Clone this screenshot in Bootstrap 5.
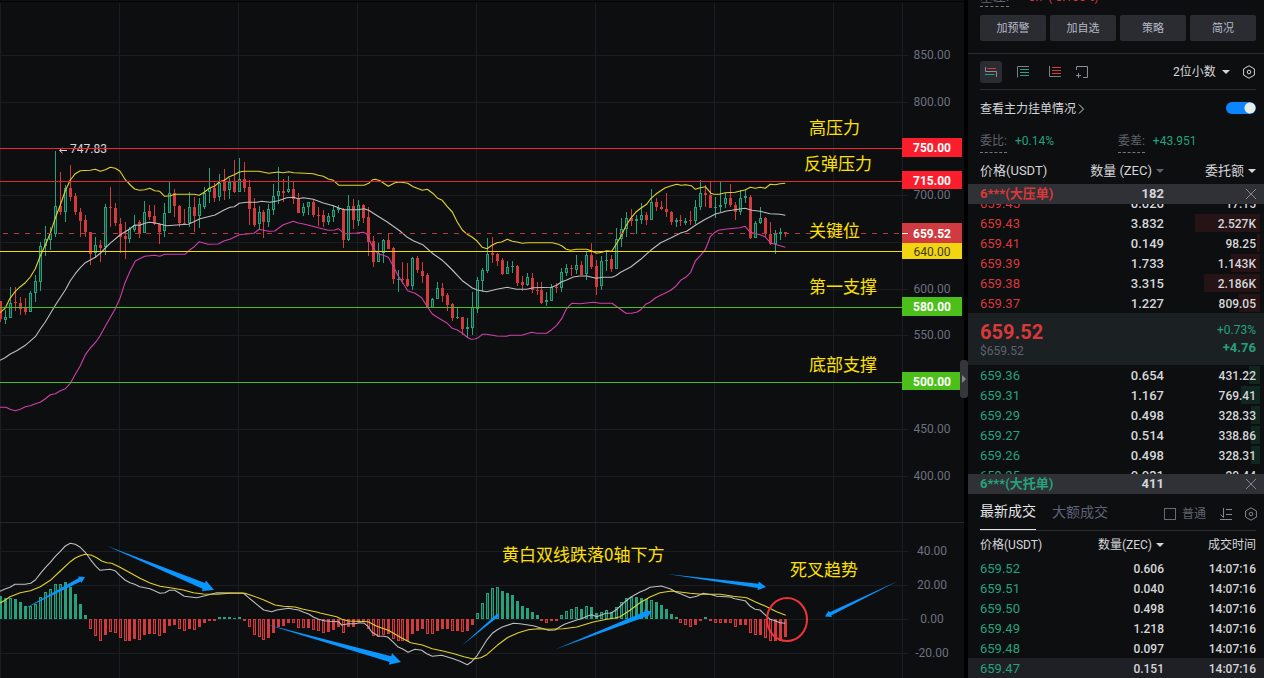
<!DOCTYPE html>
<html lang="zh-CN">
<head>
<meta charset="utf-8">
<meta name="viewport" content="width=device-width, initial-scale=1">
<title>ZEC/USDT</title>
<link href="https://cdn.jsdelivr.net/npm/bootstrap@5.3.0/dist/css/bootstrap.min.css" rel="stylesheet">
<style>
:root{--up:#25a17b;--down:#d9393a;--ink:#d5d6d9;--dim:#5f636e}
body{background:#0d0e10;color:var(--ink);font:13px/20px Roboto,"Noto Sans CJK SC",sans-serif;overflow:hidden}
.chart{background:#0d0e10;min-width:0;border-right:4px solid #000}
.chart svg{width:100%;height:auto}
.axis{font-size:12px;fill:#6c7080}
.tag{font-size:12px;font-weight:700;fill:#fff}
.note{font-size:17px;fill:#ffe100;font-family:"Noto Sans CJK SC",sans-serif}
.handle{position:absolute;right:-4px;top:360px;width:8px;height:38px;background:#35363c;border:0;border-radius:3px;padding:0;color:#85868c}
.handle svg{width:8px;height:38px}
.side{width:296px;background:#0d0e10}
.up{color:var(--up)}
.down{color:var(--down)}
.dim{color:var(--dim)}
.px-side{padding-left:12px;padding-right:8px}
.basis{height:7px;line-height:22px}
.basis span{margin-top:-14px;height:21px}
.hint{border-bottom:1px dashed #777}
.tool{flex:1 1 0;background:#2b2c32;color:#b3b9c6;border:0;border-radius:2px;font-size:11px;line-height:28px;height:26px;padding:0}
.tool:hover{background:#383940;color:#fff}
.rule{height:1px;background:#2b2c30}
.split{margin-top:12px}
.views{height:35px}
.views .ico+.ico{margin-left:10px}
.views .ico:nth-child(4){margin-left:5px}
.ico{width:22px;height:22px;padding:0;border:0;border-radius:3px;background:none;line-height:0}
.ico.on{background:#2b2c32}
.ico svg,.plain svg{display:block}
.plain{border:0;background:none;padding:0;color:inherit}
.gear{margin-left:12px}
.digits{appearance:none;background:none;border:0;color:var(--ink);font-size:12px;padding:0;width:49px}
.caret{width:0;height:0;border:4px solid transparent;border-top-color:currentColor;border-bottom:0;display:inline-block;vertical-align:2px;margin-left:4px}
.main-row{height:37px}
.side .switch{width:30px;height:12px;margin:0 0 1px;border:0;background-color:#0a84ff;border-radius:6px;appearance:none;background-image:radial-gradient(circle at 24px 6px,#e8eee6 5px,transparent 6px);display:block}
.stat{height:24px;padding-top:5px;line-height:18px}
.stat .hint{height:21px}
.diff{margin-left:64px}
.cols{display:grid;grid-template-columns:96px 88px 1fr}
.cols>:nth-child(2),.cols>:nth-child(3){text-align:right}
.head{height:33px;padding-top:10px}
.band{height:20px;background:#303136;font-weight:700}
.ladder{height:109px;overflow:hidden}
.tick{width:100%;table-layout:fixed;flex-shrink:0}
.tick td,.tick th{height:20px;padding:0;text-align:right;font-weight:400}
.tick td{padding-top:2px;line-height:18px}
.tick td+td{font-weight:500}
.tick td:first-child,.tick th:first-child{text-align:left;padding-left:12px;width:108px}
.tick td:nth-child(2),.tick th:nth-child(2){width:88px}
.tick td:last-child,.tick th:last-child{font-size:12px;padding-right:8px;background-repeat:no-repeat;background-position:right 4px center}
.trades td:nth-child(2){font-size:12px}
.asks td:last-child{background-image:linear-gradient(#261315,#261315)}
.bids td:last-child{background-image:linear-gradient(#0f2720,#0f2720)}
.tick th{font-size:12px;height:27px}
.tick .now{background:#1f2025}
.last{height:52px;background:#1b2023}
.big{font-size:20px;font-weight:700;line-height:20px;padding-top:4px}
.usd{line-height:18px}
.move{line-height:17px}
.tab{font-size:14px;line-height:35px;height:36px;padding:0;border:0;background:none;color:#5e6378}
.tab.on{color:#e4e5e8;border-bottom:1px solid #e4e5e8}
.tabs .plain,.tabs label{margin-top:4px}
.tabs .sort{margin-left:14px}
.tabs .last-tool{margin-left:12px;margin-right:-2px}
.tick-box{appearance:none;width:12px;height:12px;border:1px solid #666a72;margin:0 6px 0 0}
.small-t{font-size:12px}
</style>
<script src="https://cdn.jsdelivr.net/npm/bootstrap@5.3.0/dist/js/bootstrap.bundle.min.js"></script>
</head>
<body>
<div class="d-flex vh-100">
<main class="chart flex-grow-1 position-relative">
<svg id="plot" viewBox="0 0 964 678" class="d-block" role="img" aria-label="K线图与MACD"></svg>
<button class="handle" type="button" aria-label="展开"><svg class="d-block" viewBox="0 0 8 38"><path d="M2 15l4 4-4 4z" fill="currentColor"/></svg></button>
</main>

<aside class="side flex-shrink-0 overflow-hidden">
  <div class="px-side d-flex basis overflow-hidden"><span class="hint dim">基差:</span><span class="down ms-3 small-t">-0.7 (-0.106%)</span></div>
  <div class="px-side d-flex gap-1 pt-2">
    <button class="btn tool" type="button">加预警</button>
    <button class="btn tool" type="button">加自选</button>
    <button class="btn tool" type="button">策略</button>
    <button class="btn tool" type="button">简况</button>
  </div>
  <div class="rule split"></div>
  <div class="px-side">
    <div class="d-flex align-items-center views">
      <button class="ico on" type="button" aria-label="买卖盘"><svg width="22" height="22" fill="none"><path d="M5.500 6v4.500h11V16" stroke="#8b8e96"/><path d="M7.500 7.500H16" stroke="#e0393b"/><path d="M5 13.500h9.500" stroke="#25a17b"/></svg></button>
      <button class="ico" type="button" aria-label="买盘"><svg width="22" height="22" fill="none"><path d="M17 5.500H5.500V16.500" stroke="#7d8088"/><path d="M8 8.500h9M8 11.500h9M8 14.500h9" stroke="#25a17b"/></svg></button>
      <button class="ico" type="button" aria-label="卖盘"><svg width="22" height="22" fill="none"><path d="M5.500 5v10.500H17" stroke="#7d8088"/><path d="M8 6.500h9M8 9.500h9M8 12.500h9" stroke="#d9393a"/></svg></button>
      <button class="ico" type="button" aria-label="新建"><svg width="22" height="22" fill="none" stroke="#8b8e96"><path d="M5.500 9V5.500h11v11H12M5 14.500h5M7.500 12v5"/></svg></button>
      <select class="digits ms-auto" aria-label="小数位数"><option>2位小数</option></select><span class="caret m-0"></span>
      <button class="plain gear" type="button" aria-label="设置"><svg width="14" height="14" viewBox="0 0 14 14" fill="none" stroke="currentColor"><path d="M7 .8l5.400 3.100v6.200L7 13.200l-5.400-3.100V3.900z"/><circle cx="7" cy="7" r="1.800"/></svg></button>
    </div>
    <div class="rule"></div>
    <div class="d-flex align-items-center justify-content-between main-row">
      <a href="#" class="text-reset text-decoration-none small-t">查看主力挂单情况<svg width="9" height="10" viewBox="0 0 9 10" fill="none" stroke="currentColor"><path d="M3 .5l4.500 4.500L3 9.500"/></svg></a>
      <input class="switch" type="checkbox" role="switch" aria-label="查看主力挂单情况" checked>
    </div>
    <div class="d-flex stat small-t">
      <span><span class="hint dim d-inline-block">委比:</span><span class="up ms-2">+0.14%</span></span>
      <span class="diff"><span class="hint dim d-inline-block">委差:</span><span class="up ms-2">+43.951</span></span>
    </div>
    <div class="cols head">
      <div>价格(USDT)</div><div class="text-nowrap">数量 (ZEC)<span class="caret dim"></span></div><div>委托额<span class="caret"></span></div>
    </div>
  </div>
  <div class="band px-side cols align-items-center"><span class="down">6***(大压单)</span><span>182</span><button class="plain dim ms-auto" type="button" aria-label="关闭"><svg width="10" height="10" viewBox="0 0 10 10" stroke="#85878e"><path d="M0 0l10 10M10 0L0 10"/></svg></button></div>
  <div class="ladder d-flex flex-column justify-content-end"><table class="tick asks" id="asks"></table></div>
  <div class="last px-side d-flex justify-content-between align-items-center">
    <div><div class="big down">659.52</div><div class="dim small-t usd">$659.52</div></div>
    <div class="text-end up move"><div class="small-t">+0.73%</div><div class="fw-bold">+4.76</div></div>
  </div>
  <div class="ladder"><table class="tick bids" id="bids"></table></div>
  <div class="band px-side cols align-items-center"><span class="up">6***(大托单)</span><span>411</span><button class="plain dim ms-auto" type="button" aria-label="关闭"><svg width="10" height="10" viewBox="0 0 10 10" stroke="#85878e"><path d="M0 0l10 10M10 0L0 10"/></svg></button></div>
  <div class="px-side">
    <div class="d-flex align-items-center tabs">
      <button class="tab on" type="button">最新成交</button><button class="tab ms-3" type="button">大额成交</button>
      <label class="ms-auto d-flex align-items-center small-t dim"><input class="tick-box" type="checkbox">普通</label>
      <button class="plain sort" type="button" aria-label="排序"><svg width="12" height="12" fill="none" stroke="#85878e"><path d="M3.500 0v9.500L.5 6.500M6 1.500h6M6 6.500h6M0 11.500h12"/></svg></button>
      <button class="plain last-tool" type="button" aria-label="设置"><svg width="14" height="14" viewBox="0 0 14 14" fill="none" stroke="#85878e"><path d="M7 .8l5.400 3.100v6.200L7 13.200l-5.400-3.100V3.900z"/><circle cx="7" cy="7" r="1.800"/></svg></button>
    </div>
    <div class="rule"></div>
  </div>
  <table class="tick trades"><thead><tr><th>价格(USDT)</th><th>数量(ZEC)<span class="caret"></span></th><th>成交时间</th></tr></thead><tbody id="trades"></tbody></table>
</aside>
</div>
<script>
const W='#bdbec1',Y='#e3d229',M='#cf3fa8',UP='#25a17b',DN='#d23b3c',BLUE='#0a96ff';
let out='';
const line=(x1,y1,x2,y2,c,extra='')=>out+=`<path d="M${x1} ${y1}L${x2} ${y2}" stroke="${c}" ${extra}/>`;
const rect=(x,y,w,h,c,extra='')=>out+=`<rect x="${x}" y="${y}" width="${w}" height="${h}" fill="${c}" ${extra}/>`;
const text=(x,y,s,cls,extra='')=>out+=`<text x="${x}" y="${y}" class="${cls}" ${extra}>${s}</text>`;

// grid
for(const x of [0,119,238,357,476,595,714,833,902]) line(x+.5,3,x+.5,678,'#1b1d20');
for(const y of [55,102,195,242,289,335,429,476,551,585,619,653]) line(0,y+.5,908,y+.5,'#1b1d20');
line(0,522.5,964,522.5,'#25272b');
line(0,1.5,964,1.5,'#050506');

// candles: high, open/close top, bottom, low in thirds of a unit below y=130; letter marks direction
const candles=`r513,513,568,575 g540,561,569,583 g470,520,563,563 r470,517,520,542 r502,519,536,555 r505,535,545,556 g483,489,545,545 g435,454,490,517 g337,349,455,482 g289,327,348,377 g290,310,330,360 g62,229,311,320 r125,228,245,255 g165,174,245,277 r106,175,200,212 r190,197,245,255 r233,246,272,320 r256,270,306,320 r305,306,372,405 g321,345,370,383 r330,345,353,395 g222,231,350,374 r172,231,235,290 r220,233,280,288 r265,281,320,368 r277,318,326,388 g290,298,326,338 g255,284,300,305 r270,275,312,325 g213,245,309,309 r225,244,262,270 r225,258,283,285 r278,282,305,343 g220,248,304,322 g157,190,250,250 r176,190,228,260 r225,227,278,290 r238,279,282,285 g185,232,280,290 r200,232,257,307 g205,222,257,294 g170,188,230,236 g115,174,187,220 r160,175,203,217 g133,160,201,212 r117,156,182,210 g143,157,180,206 r91,155,187,188 g84,148,187,187 r97,148,173,186 r150,172,236,286 r203,235,285,290 g227,247,283,300 r240,247,275,325 g222,238,275,290 g162,199,239,256 g112,184,199,222 r148,184,188,217 g138,178,187,189 r152,178,208,222 r190,207,248,250 g218,230,248,258 g215,217,231,255 r207,217,255,260 r230,254,258,288 r240,256,276,292 g248,259,276,284 g224,240,260,275 g226,234,239,248 r233,237,330,353 g195,229,329,334 r206,229,271,298 g210,226,272,288 r223,225,264,280 r232,262,335,378 r318,334,395,410 g340,368,395,395 g327,331,368,400 r312,330,356,358 r352,354,448,462 g420,447,450,487 r395,446,450,462 r398,448,467,470 g382,385,467,480 r378,385,420,430 r395,422,437,460 r430,435,532,535 g503,508,533,533 g455,475,508,508 r458,475,498,517 r488,495,524,543 r520,523,563,573 g532,560,564,568 r560,562,597,615 g565,592,596,625 g485,532,593,616 g442,451,536,548 g415,420,452,485 g325,373,422,430 r320,370,374,400 r370,372,392,408 r385,390,432,434 g394,412,431,432 g393,407,411,428 r406,408,458,468 r437,456,464,483 g430,442,465,467 r428,443,480,488 r455,480,484,495 r455,480,518,522 g486,510,517,529 g462,472,513,513 r460,470,475,488 g415,426,475,485 g402,415,428,438 r404,413,417,438 g375,404,420,431 r393,405,435,435 g363,376,433,450 r338,375,410,418 r390,407,470,495 g378,394,469,480 g362,389,394,423 r376,387,416,425 g294,328,416,418 g265,298,328,350 g245,265,297,322 r237,265,272,288 g255,266,272,312 g220,255,270,282 r245,255,270,285 g177,217,269,270 r205,217,232,242 r212,231,238,240 r188,237,247,262 r243,247,275,285 g265,271,276,292 r255,270,274,288 g265,274,278,285 r243,270,274,285 g210,232,274,282 g150,189,232,240 r165,190,196,230 r157,196,233,235 g202,230,234,263 g155,224,230,245 g190,204,223,235 r162,205,225,232 r215,225,247,270 g180,203,247,255 g178,198,203,218 r195,202,325,328 g273,279,323,325 g232,265,280,282 r262,265,310,320 r275,311,342,345 g300,312,343,372 g293,307,313,330 r305,307,313,322`.split(' ');
const slot=i=>Math.floor(.9+4.964*i);
candles.forEach((s,i)=>{
  const up=s[0]=='g',c=up?UP:DN,[h,t,b,l]=s.slice(1).split(',').map(v=>Math.round(130+v/3)),x=slot(i),bh=Math.max(1,b-t);
  rect(x,h,1,l-h,c); rect(x-1,t,3,bh,c);
  if(up&&bh>2) rect(x,t+1,1,bh-2,'#123d32');
});

// curves given as panel segments with their own horizontal origin
const curve=(base,c,...seg)=>{
  const p=[];
  for(const [ox,oy,d] of seg) for(const q of d.split(' ')){const [x,y]=q.split(',');p.push(((+x+ox)/3).toFixed(1)+' '+(base+(+y+oy)/3).toFixed(1))}
  out+=`<path d="M${p.join('L')}" fill="none" stroke="${c}" stroke-width="1.1" stroke-linejoin="round"/>`;
};
curve(130,Y,[0,0,'0,548 16,534 30,505 46,484 61,470 76,458 91,441 106,416 121,377 136,345 151,310 166,264 181,225 196,182 211,150 226,131 241,122 271,121 286,118 301,124 316,119 331,112 346,115 360,124 376,149 391,165 404,177 419,181 434,179 449,175 464,182 479,184 494,199 511,197 526,193 583,193 598,196 613,187 628,175 643,169 658,156 673,151 688,140 703,134 718,126 733,124 776,124 806,130 835,126 850,128 866,125 881,128 915,130'],
 [900,0,'40,131 55,136 70,139 85,147 100,151 117,166 192,166 206,160 218,149 226,148 240,152 265,169 285,158 300,156 323,160 340,170 367,181 382,178 400,191 412,204 427,211 442,230 457,246 472,276 487,300 502,313 517,322 532,334 547,352 561,356 576,346 591,338 605,336 622,328 637,334 650,336 667,340 685,338 757,338 775,343 785,347 799,358 812,361 829,358 860,358 875,363 890,370 905,367 920,362'],
 [1740,-60,'95,424 107,405 122,380 138,347 152,325 167,307 182,295 200,283 212,266 227,253 242,242 256,233 272,228 290,223 303,226 317,224 334,227 346,238 361,233 376,230 393,250 401,253 418,253 436,248 466,247 481,243 495,240 511,232 526,235 541,232 556,235 571,223 586,224 600,221 616,220']);
curve(130,W,[0,0,'0,691 15,683 31,672 50,662 76,646 106,620 121,597 136,576 166,526 196,480 211,452 226,431 241,413 256,398 271,390 286,382 301,370 316,354 330,340 360,315 390,296 404,285 419,286 434,280 449,277 466,279 479,282 500,287 540,284 565,283 580,276 600,266 645,255 672,240 690,232 703,230 718,220 740,217 770,217 785,214 810,217 835,212 860,203 880,202 895,206 910,203'],
 [900,0,'40,208 70,219 100,227 117,234 132,239 175,239 192,236 206,241 220,250 262,276 300,303 322,322 340,332 368,344 400,372 427,391 442,405 457,420 487,452 502,463 517,474 532,480 560,485 590,478 622,472 650,478 680,478 700,473 755,472 770,466 785,455 800,450 820,441'],
 [1740,-60,'0,498 20,498 48,505 68,502 96,502 107,497 122,487 152,471 182,448 212,421 242,398 272,384 302,369 320,364 346,346 376,328 391,320 406,312 421,308 440,303 495,295 515,301 540,304 570,311 600,313 616,316']);
curve(130,M,[0,0,'0,832 18,832 30,838 46,842 61,838 76,830 91,827 106,821 121,817 136,806 151,794 166,791 181,782 196,776 211,760 226,733 241,707 256,674 271,654 286,638 300,618 315,590 345,538 360,505 375,458 390,424 406,393 419,386 434,379 464,376 479,379 494,373 555,373 568,361 583,350 598,335 624,343 655,342 673,332 690,328 718,314 740,312 762,310 777,298 806,304 824,303 850,284 880,274 895,279'],
 [900,0,'0,280 20,284 85,301 104,300 115,296 133,311 170,309 190,307 200,312 215,345 225,362 235,372 250,376 265,382 278,405 293,435 308,458 323,482 345,490 365,503 382,530 397,552 412,562 442,580 457,595 472,600 487,610 502,622 512,628 524,627 535,623 547,613 560,613 590,618 620,619 630,616 665,616 695,607 710,610 740,610 755,599 770,586 785,566 800,535 815,520'],
 [1740,-60,'0,581 40,577 60,580 96,580 115,593 138,610 155,610 172,606 182,599 197,583 210,577 227,563 256,549 272,541 287,529 302,511 317,502 332,487 346,453 361,437 376,419 391,380 401,370 415,361 440,357 480,353 495,349 511,367 540,374 556,381 571,398 590,404 616,412']);

// MACD histogram, h = hollow bar
const hist='198 204 205h 207 216 228 228h 222h 201h 186h 178h 163h 162h 156 170 192 222 255 297h 318h 333h 315 306h 308h 323h 332h 333 327 329h 315 312 312h 317h 308 288 285 297h 302h 297 299h 290 279 272 272 262 262 262 264 262 272 290h 314h 320h 329h 324 308 290 288 278 280h 293h 293h 293 299h 302h 308h 305 299 290 308h 290 290 275 275 298h 317h 322h 314h 311 328h 334h 334h 332 311 302 297 311h 311h 302 296 296 302h 302 305h 302 285 250h 219h 190h 174h 172h 183 189 196 213 228 234 246 255 272 280h 272 272 256h 244h 238h 231h 238 228h 232 250 246h 240h 247 232h 217h 204h 200h 202 204 207 210h 216 225 237 252 261 279h 284h 290h 284 272 262 272 278h 278h 278 280h 290h 284 284 308h 314h 314 323h 332h 332 332 320'.split(' ');
hist.forEach((s,i)=>{
  const v=parseInt(s),up=v<267,c=up?UP:DN,x=slot(i)-1,y=Math.round(530+v/3),h=up?619-y:y-619;
  const t=up?y:619;
  rect(x,t,3,Math.max(1,h),c);
  if(s.endsWith('h')&&h>2) rect(x+1,t+1,1,h-2,up?'#14493b':'#4b191b');
});
curve(530,W,[0,0,'0,184 15,177 30,172 45,163 75,163 92,160 106,150 121,131 136,113 151,97 166,79 181,64 196,48 211,40 226,43 241,52 256,67 271,88 286,107 300,121 330,118 345,122 360,137 375,150 390,158 404,163 419,170 450,176 480,190 495,188 508,181 524,181 538,189 553,199 590,203 615,197 650,188 730,189 745,202 770,223 791,240 815,245 830,240 866,235 881,238 896,240 911,247 926,252 941,262 956,268 972,272'],
 [960,0,'30,274 55,275 65,285 85,281 105,281 118,278 133,280 145,290 155,306 175,318 190,319 203,321 218,335 233,350 248,357 264,367 285,358 305,361 320,371 337,379 365,376 400,386 420,394 442,404 455,395 472,376 487,352 502,328 517,310 532,299 547,291 580,280 600,281 640,287 665,295 685,301 705,300 720,290 735,282 770,270 785,266 800,259 815,254 830,260 858,250 873,249 888,240 903,226 918,213 933,201'],
 [1920,0,'0,186 15,180 30,172 64,168 92,177 107,186 125,193 150,203 170,199 190,190 215,194 230,199 270,201 285,206 315,212 330,228 345,238 360,240 375,254 390,268 405,272 420,278 435,280']);
curve(530,Y,[0,0,'0,219 15,211 30,200 61,188 91,182 121,170 151,151 181,123 211,95 226,84 241,77 256,73 275,76 290,83 305,93 320,98 335,100 360,112 390,128 420,145 450,159 480,169 510,173 550,180 580,188 610,192 650,193 690,190 735,190 760,198 790,209 825,225 850,229 885,231 910,238 950,246'],
 [960,0,'0,249 50,260 65,268 85,273 145,275 170,289 205,301 245,324 272,338 307,345 337,356 372,364 402,371 432,380 460,387 482,383 500,374 532,346 562,323 595,308 625,299 655,296 685,298 730,296 770,291 820,276 860,268 885,264 900,260 930,241'],
 [1920,0,'0,218 30,201 60,188 95,183 150,190 185,193 240,193 280,199 320,203 345,215 380,230 410,245 437,256']);

// peak label, then the horizontal levels
line(60,150.5,67,150.5,'#d5d6d9');
out+='<path d="M62.500 148l-3 2.500 3 2.500" fill="none" stroke="#d5d6d9"/>';
text(70,153,'747.83','axis','style="fill:#d5d6d9"');
line(0,233.5,902,233.5,'#b23b3d','stroke-dasharray="5 6" stroke-dashoffset="-3"');
[[148,'#ff1f2b'],[181,'#e82430'],[251,'#f4d90f'],[307,'#4dbf1a'],[382,'#4dbf1a']].forEach(([y,c])=>line(0,y+.5,902,y+.5,c));

// price axis
[[55,'850.00'],[102,'800.00'],[195,'700.00'],[289,'600.00'],[335,'550.00'],[429,'450.00'],[476,'400.00'],[551,'40.00'],[585,'20.00'],[619,'0.00'],[653,'-20.00']].forEach(([y,s])=>text(932,y+4,s,'axis','text-anchor="middle"'));
[[138,19,'#fa1e2d','750.00'],[171,18,'#fa1e2d','715.00'],[223,20,'#cf3b40','659.52'],[243,16,'#f2d410','640.00'],[297,19,'#4dbf1a','580.00'],[372,18,'#4dbf1a','500.00']].forEach(([y,h,c,s])=>{
  rect(902,y,60,h,c);
  const dark=s=='640.00';
  text(932,Math.floor(y+h/2+5),s,'tag','text-anchor="middle"'+(dark?' style="fill:#3d3a20;font-weight:400"':''));
});
line(902,233.5,908,233.5,'#fff');

// drawings
const arrow=(x1,y1,x2,y2,w,hw,hl)=>{
  const L=Math.hypot(x2-x1,y2-y1),ux=(x2-x1)/L,uy=(y2-y1)/L,bx=x2-ux*hl,by=y2-uy*hl;
  const p=(k)=>(bx-uy*k).toFixed(1)+','+(by+ux*k).toFixed(1);
  out+=`<polygon points="${x1},${y1} ${p(w)} ${p(hw)} ${x2},${y2} ${p(-hw)} ${p(-w)}" fill="${BLUE}"/>`;
};
arrow(22,610,85,577,2,3.6,6);
arrow(106,545.5,214,590,3.2,5.6,11);
arrow(265,624,401,662,3,6,11);
arrow(462,645.5,499,614,1.4,1.8,2);
arrow(555,649.5,652,611.5,2.5,4,7);
arrow(667,574,766,587,2.2,4.4,8);
arrow(898,581,825,616.5,1.7,3.6,6);
out+='<ellipse cx="787" cy="619.5" rx="20" ry="21.500" fill="none" stroke="#ef3338" stroke-width="2"/>';
[[809,134,'高压力'],[804,170,'反弹压力'],[809,237,'关键位'],[809,293,'第一支撑'],[809,371,'底部支撑'],[502,561,'黄白双线跌落0轴下方'],[790,576,'死叉趋势']].forEach(([x,y,s])=>text(x,y,s,'note'));
document.getElementById('plot').innerHTML=out;

// order book: price, amount, total, depth bar width
const fill=(id,cls,rows)=>document.getElementById(id).innerHTML=rows.map(([p,q,t,d=0],i)=>`<tr${id=='trades'&&i==5?' class="now"':''}><td class="${cls}">${p}</td><td>${q}</td><td style="background-size:${d}px 18px">${t}</td></tr>`).join('');
fill('asks','down',[['659.45','0.026','17.15'],['659.43','3.832','2.527K',65],['659.41','0.149','98.25',3],['659.39','1.733','1.143K',29],['659.38','3.315','2.186K',56],['659.37','1.227','809.05',21]]);
fill('bids','up',[['659.36','0.654','431.22',11],['659.31','1.167','769.41',19],['659.29','0.498','328.33',9],['659.27','0.514','338.86',9],['659.26','0.498','328.31',9],['659.25','0.031','20.44']]);
fill('trades','up',[['659.52','0.606'],['659.51','0.040'],['659.50','0.498'],['659.49','1.218'],['659.48','0.097'],['659.47','0.151']].map(r=>[...r,'14:07:16']));
</script>
</body>
</html>
